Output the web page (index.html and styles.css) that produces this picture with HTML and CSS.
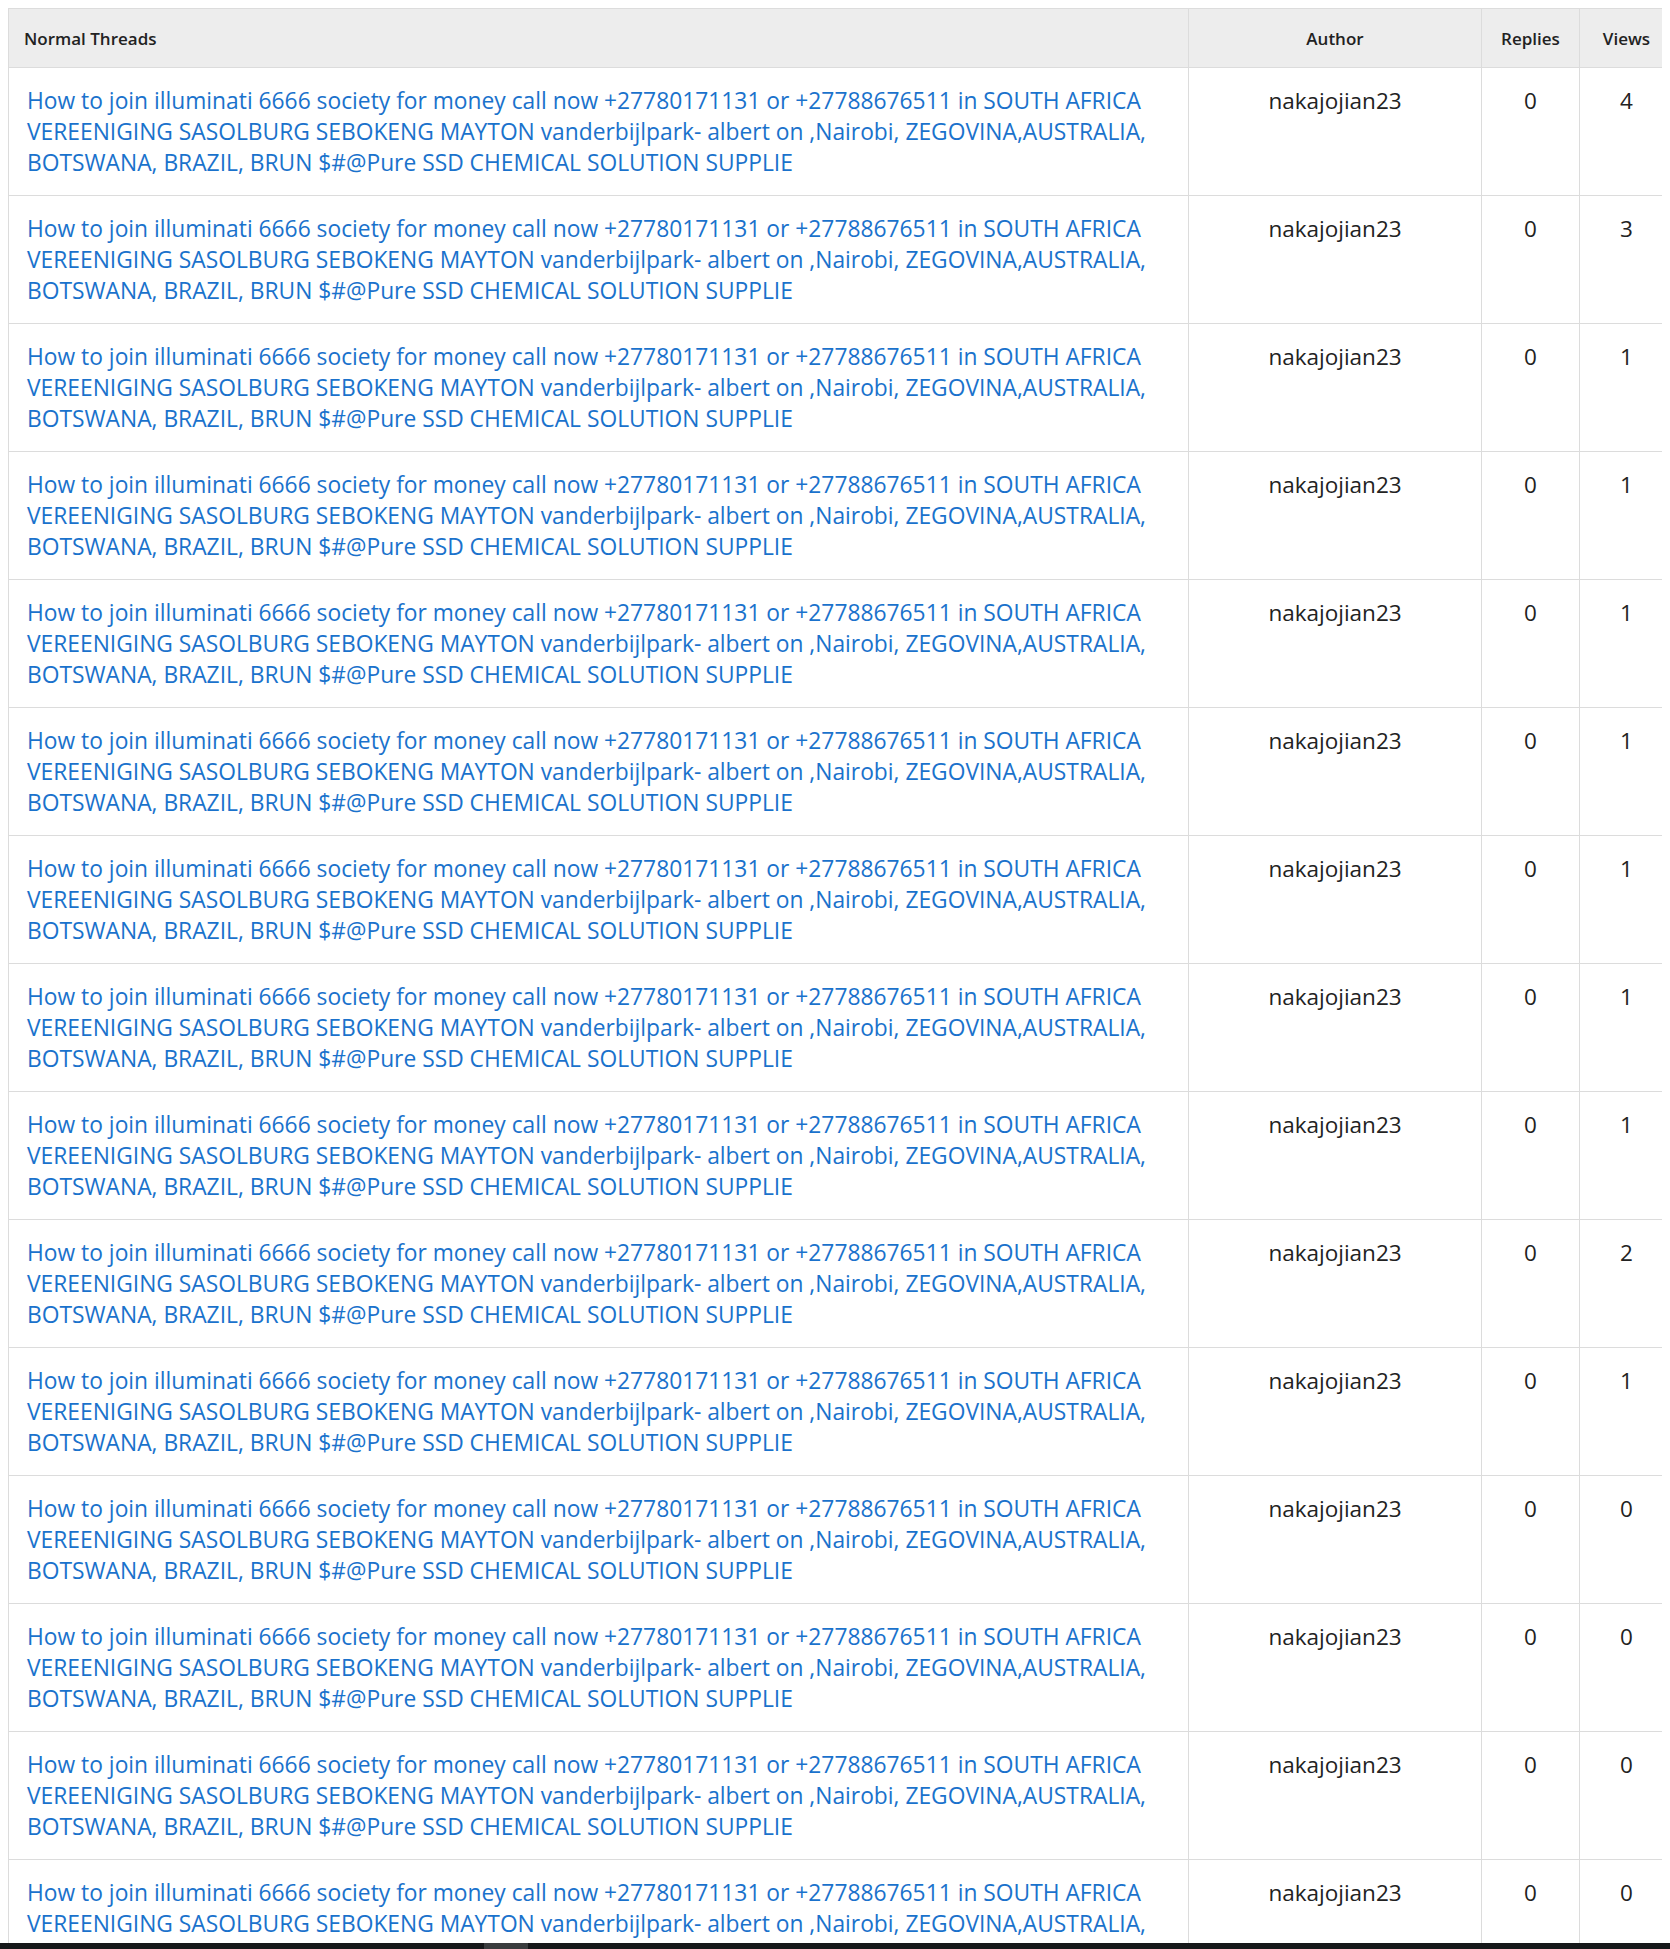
FILE: index.html
```html
<!DOCTYPE html>
<html lang="en">
<head>
    <meta charset="UTF-8">
    <meta name="viewport" content="width=device-width, initial-scale=1.0">
    <title>Normal Threads</title>
    <link rel="stylesheet" href="styles.css">
</head>
<body>
    <!-- Thread list -->
    <table class="threads">
        <colgroup>
            <col class="col-title">
            <col class="col-author">
            <col class="col-replies">
            <col class="col-views">
        </colgroup>
        <thead>
            <tr>
                <th class="title">Normal Threads</th>
                <th>Author</th>
                <th>Replies</th>
                <th>Views</th>
            </tr>
        </thead>
        <tbody id="thread-rows"></tbody>
    </table>

    <!-- bottom scroll bar -->
    <div class="scrollbar"><div class="scrollbar-thumb"></div></div>

    <script>
        const title = 'How to join illuminati 6666 society for money call now +27780171131 or +27788676511 in SOUTH AFRICA VEREENIGING SASOLBURG SEBOKENG MAYTON vanderbijlpark- albert on ,Nairobi, ZEGOVINA,AUSTRALIA, BOTSWANA, BRAZIL, BRUN $#@Pure SSD CHEMICAL SOLUTION SUPPLIE';
        const views = [4, 3, 1, 1, 1, 1, 1, 1, 1, 2, 1, 0, 0, 0, 0, 0];
        const tbody = document.getElementById('thread-rows');

        views.forEach(v => {
            const tr = document.createElement('tr');
            tr.innerHTML =
                '<td class="title"><a href="#"></a></td>' +
                '<td>nakajojian23</td>' +
                '<td>0</td>' +
                '<td>' + v + '</td>';
            tr.querySelector('a').textContent = title;
            tbody.appendChild(tr);
        });
    </script>
</body>
</html>
```

FILE: styles.css
```css
html, body {
    overflow: hidden;
}

body {
    margin: 8px;
    font-family: "Open Sans", Arial, sans-serif;
    color: #222;
    background: #fff;
}

/* Table */
.threads {
    border-collapse: collapse;
    width: 1665px;
    table-layout: fixed;
}

.col-title { width: 1180px; }
.col-author { width: 293px; }
.col-replies { width: 98px; }
.col-views { width: 94px; }

.threads th,
.threads td {
    border: 1px solid #dcdcdc;
    vertical-align: top;
    text-align: center;
}

.threads th {
    background: #ededed;
    font-size: 17px;
    font-weight: 600;
    height: 58px;
    padding: 0 6px;
    vertical-align: middle;
    color: #222;
}

.threads td {
    font-size: 22.5px;
    line-height: 31px;
    padding: 17px 18px;
    height: 93px;
}

.threads .title {
    text-align: left;
}

.threads th.title {
    padding-left: 15px;
}

.threads a {
    font-size: 22.8px;
    color: #1a72cc;
    text-decoration: none;
}

/* scroll bar at bottom */
.scrollbar {
    position: fixed;
    left: 0;
    right: 0;
    bottom: 0;
    height: 6px;
    background: #16181a;
}

.scrollbar-thumb {
    position: absolute;
    left: 484px;
    width: 44px;
    top: 0;
    bottom: 0;
    background: #3a3c3e;
}
```
